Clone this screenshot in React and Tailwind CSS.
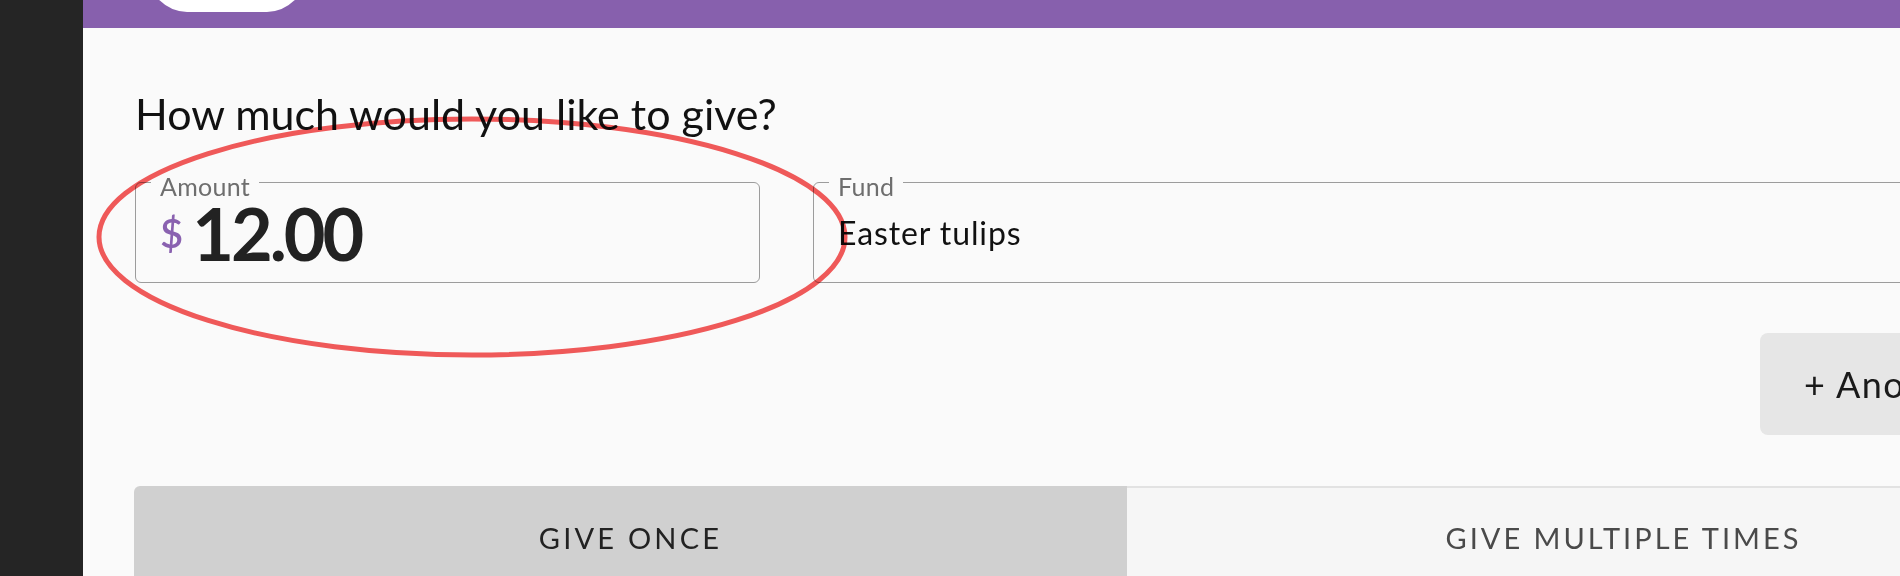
export default function App() {
  return (
    <div className="relative flex h-[576px] w-[1900px] overflow-hidden font-['Lato',sans-serif]">
      <div className="w-[83px] shrink-0 bg-[#252525]" />
      <div className="relative flex-1 overflow-hidden bg-[#fafafa]">
        <div className="relative h-[28px] bg-[#8760ad]">
          <div className="absolute left-[66px] top-[-68px] h-[80px] w-[156px] rounded-[38px] bg-white" />
        </div>
        <div className="w-[2037px] shrink-0 pl-[52px]">
          <h1 className="mt-[61px] whitespace-nowrap text-[43px] font-normal leading-[50px] text-[#111]">
            How much would you like to give?
          </h1>
          <div className="mt-[43px] flex h-[101px] gap-[53px]">
            <div className="relative flex w-[625px] shrink-0 items-center rounded-[6px] border border-[#9c9c9c] pl-[24px]">
              <span className="absolute left-[15px] top-[-9px] whitespace-nowrap bg-[#fafafa] px-[9px] text-[25px] leading-[24px] tracking-[0.3px] text-[#6e6e6e]">
                Amount
              </span>
              <span className="text-[40px] font-semibold leading-[48px] text-[#8a62b0]">$</span>
              <span className="ml-[9px] text-[72px] font-bold tracking-[-3px] text-[#222]">12.00</span>
            </div>
            <div className="relative flex flex-1 items-center rounded-[6px] border border-[#9c9c9c] pl-[24px]">
              <span className="absolute left-[15px] top-[-9px] whitespace-nowrap bg-[#fafafa] px-[9px] text-[25px] leading-[24px] tracking-[0.3px] text-[#6e6e6e]">
                Fund
              </span>
              <span className="whitespace-nowrap text-[32px] tracking-[0.9px] text-[#111]">Easter tulips</span>
            </div>
          </div>
          <div className="mt-[50px] flex justify-end">
            <button className="flex h-[102px] w-[360px] shrink-0 items-center whitespace-nowrap rounded-[8px] bg-[#e6e6e6] pl-[44px] text-[36px] leading-[36px] tracking-[1.5px] text-[#1a1a1a]">
              + Another Fund
            </button>
          </div>
          <div className="-ml-px mt-[51px] flex">
            <div className="flex w-[993px] shrink-0 justify-center whitespace-nowrap rounded-tl-[6px] bg-[#d0d0d0] py-[34px] text-[29px] leading-[35px] tracking-[3.2px] text-[#222]">
              GIVE ONCE
            </div>
            <div className="flex w-[993px] shrink-0 justify-center whitespace-nowrap border-t-2 border-[#e2e2e2] bg-[#f6f6f6] pb-[34px] pt-[32px] text-[29px] leading-[35px] tracking-[3px] text-[#4a4a4a]">
              GIVE MULTIPLE TIMES
            </div>
          </div>
        </div>
      </div>
      <svg
        className="pointer-events-none absolute left-0 top-0 mix-blend-multiply"
        width="1900"
        height="576"
        viewBox="0 0 1900 576"
      >
        <ellipse cx="472" cy="237" rx="373" ry="118" fill="none" stroke="#f45b5b" strokeWidth="5" />
      </svg>
    </div>
  );
}
